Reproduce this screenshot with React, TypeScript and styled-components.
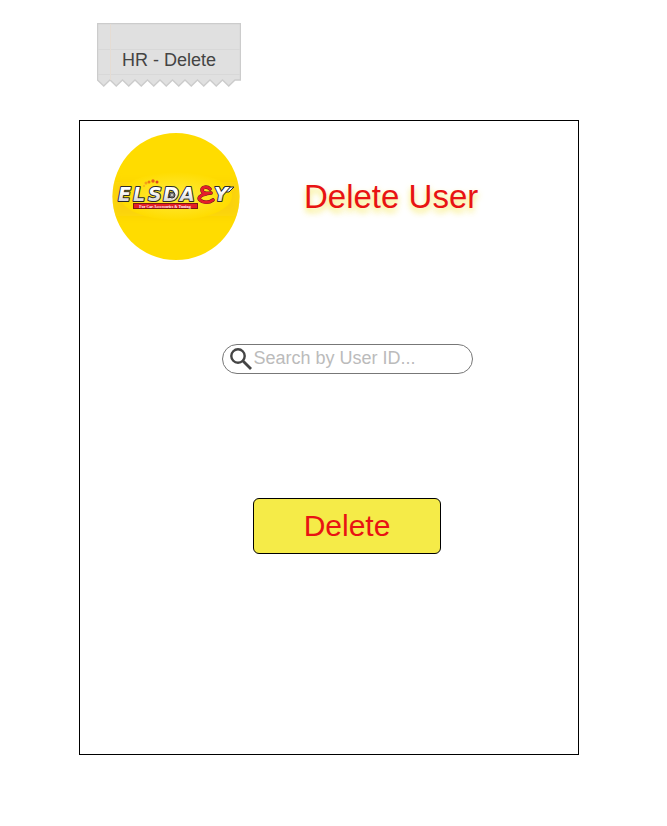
import React from 'react';
import styled, { createGlobalStyle } from 'styled-components';

const GlobalStyle = createGlobalStyle`
  *, *::before, *::after { box-sizing: border-box; }
  body {
    margin: 0;
    background: #ffffff;
    font-family: "Liberation Sans", Arial, sans-serif;
  }
`;

const Page = styled.main`
  padding: 23px 88px 71px 79px;
`;

const NoteLabel = styled.div`
  display: grid;
  width: 144px;
  height: 64px;
  margin: 0 0 33px 18px;
`;

const NotePaper = styled.svg`
  grid-area: 1 / 1;
  display: block;
`;

const NoteText = styled.span`
  grid-area: 1 / 1;
  padding-top: 27px;
  text-align: center;
  font-size: 18px;
  line-height: 20px;
  color: #444444;
  z-index: 1;
`;

const Panel = styled.section`
  display: flex;
  flex-direction: column;
  min-height: 635px;
  border: 1px solid #000000;
`;

const Header = styled.header`
  display: flex;
  align-items: center;
  gap: 64px;
  padding: 11px 32px 0;
`;

const Title = styled.h1`
  margin: 0;
  font-size: 33px;
  font-weight: 400;
  line-height: 38px;
  white-space: nowrap;
  color: #e81313;
  text-shadow: 0 4px 6px rgba(245, 230, 72, 0.9);
`;

const Form = styled.form`
  display: flex;
  flex-direction: column;
  align-items: center;
  padding: 82px 0 0 36px;
  gap: 124px;
`;

const SearchField = styled.label`
  display: flex;
  align-items: center;
  width: 251px;
  height: 30px;
  padding: 0 15px 0 7px;
  gap: 2px;
  border: 1px solid #777777;
  border-radius: 15px;
`;

const SearchIcon = styled.svg`
  flex: none;
  display: block;
`;

const SearchInput = styled.input`
  flex: 1;
  min-width: 0;
  height: 28px;
  padding: 0 0 2px;
  border: 0;
  outline: 0;
  background: transparent;
  font: 18px "Liberation Sans", Arial, sans-serif;
  color: #444444;
  &::placeholder { color: #bbbbbb; opacity: 1; }
`;

const DeleteButton = styled.button`
  width: 188px;
  height: 56px;
  padding: 0;
  border: 1px solid #000000;
  border-radius: 6px;
  background: #f5eb48;
  color: #e81313;
  font: 30px "Liberation Sans", Arial, sans-serif;
  cursor: pointer;
`;

const teeth = Array.from({ length: 11 }, (_, i) => {
  const right = 138 - i * 12.5;
  return `L${right - 6.25} 63 L${Math.max(right - 12.5, 0.5)} 57`;
}).join(' ');

function TornPaper() {
  return (
    <NotePaper width="144" height="64" viewBox="0 0 144 64" aria-hidden="true">
      <path
        d={`M0.5 0.5 H143.5 V57 H138 ${teeth} Z`}
        fill="#e0e0e0"
        stroke="#cccccc"
        strokeWidth="1.4"
      />
      <path d="M1 26.500H143M1 51.500H143" stroke="#d8d8d8" />
      <path d="M13.500 1V57" stroke="#e5dcd3" />
    </NotePaper>
  );
}

const hook = 'M98 57C95 54 90 55 90 58C90 61 94 62 99 61M94 62C88 63 86 66 88 68C91 71 97 71 101 68';

function Logo() {
  return (
    <svg width="128" height="130" viewBox="0 0 128 130" role="img" aria-label="Elsdaey logo">
      <defs>
        <radialGradient id="glow">
          <stop offset="0" stopColor="#ffec3d" />
          <stop offset="0.6" stopColor="#ffe21a" />
          <stop offset="1" stopColor="#ffdc00" />
        </radialGradient>
        <linearGradient id="chrome" x1="0" y1="0" x2="0" y2="1">
          <stop offset="0.35" stopColor="#ffffff" />
          <stop offset="1" stopColor="#c9c9c9" />
        </linearGradient>
        <filter id="soft" x="-20%" y="-50%" width="140%" height="200%">
          <feGaussianBlur stdDeviation="5" />
        </filter>
        <clipPath id="disc">
          <circle cx="64" cy="64.500" r="63.500" />
        </clipPath>
      </defs>
      <circle cx="64" cy="64.500" r="63.500" fill="#ffdc00" />
      <g clipPath="url(#disc)">
        <rect x="0" y="50" width="128" height="34" fill="#fad207" filter="url(#soft)" />
        <ellipse cx="64" cy="64" rx="56" ry="24" fill="url(#glow)" />
      </g>
      <g fill="#ee7b13">
        <circle cx="32" cy="54" r="1" fill="#f7b51b" />
        <circle cx="34" cy="51" r="1.500" fill="#f3a11a" />
        <circle cx="37" cy="50" r="1.500" />
        <circle cx="41" cy="49" r="1.700" fill="#e9601b" />
        <circle cx="45" cy="50" r="1.500" fill="#df471e" />
      </g>
      <path d="M112 55H122L117 60H110Z" fill="#f4f4f4" stroke="#292929" />
      <g
        fontFamily="DejaVu Sans, sans-serif"
        fontWeight="700"
        fontStyle="italic"
        fontSize="19"
        fill="url(#chrome)"
        stroke="#292929"
        strokeWidth="2"
        strokeLinejoin="round"
        paintOrder="stroke"
      >
        <text y="69">
          <tspan x="6">E</tspan>
          <tspan x="21">L</tspan>
          <tspan x="36">S</tspan>
          <tspan x="51">D</tspan>
          <tspan x="68">A</tspan>
          <tspan x="102">Y</tspan>
        </text>
      </g>
      <circle cx="60" cy="63" r="3" fill="#777777" stroke="#333333" />
      <circle cx="60" cy="63" r="1" fill="#dddddd" />
      <path d={hook} fill="none" stroke="#5c1a1a" strokeWidth="3.600" strokeLinecap="round" />
      <path d={hook} fill="none" stroke="#e51e2b" strokeWidth="2.800" strokeLinecap="round" />
      <rect x="21.500" y="71.500" width="64" height="5" fill="#e51e25" stroke="#7c1714" />
      <text
        x="53"
        y="76"
        textAnchor="middle"
        fontFamily="Liberation Serif, serif"
        fontWeight="700"
        fontSize="4"
        fill="#ffffff"
      >
        For Car Accessories &amp; Tuning
      </text>
    </svg>
  );
}

export default function App() {
  return (
    <>
      <GlobalStyle />
      <Page>
        <NoteLabel>
          <TornPaper />
          <NoteText>HR - Delete</NoteText>
        </NoteLabel>
        <Panel>
          <Header>
            <Logo />
            <Title>Delete User</Title>
          </Header>
          <Form onSubmit={(event: React.FormEvent) => event.preventDefault()}>
            <SearchField>
              <SearchIcon width="22" height="22" viewBox="0 0 22 22" aria-hidden="true">
                <circle cx="8" cy="8" r="6.700" fill="none" stroke="#444444" strokeWidth="2.400" />
                <path d="M13 13L21 21" stroke="#444444" strokeWidth="2.800" />
              </SearchIcon>
              <SearchInput type="text" aria-label="Search by User ID" placeholder="Search by User ID..." />
            </SearchField>
            <DeleteButton type="submit">Delete</DeleteButton>
          </Form>
        </Panel>
      </Page>
    </>
  );
}
